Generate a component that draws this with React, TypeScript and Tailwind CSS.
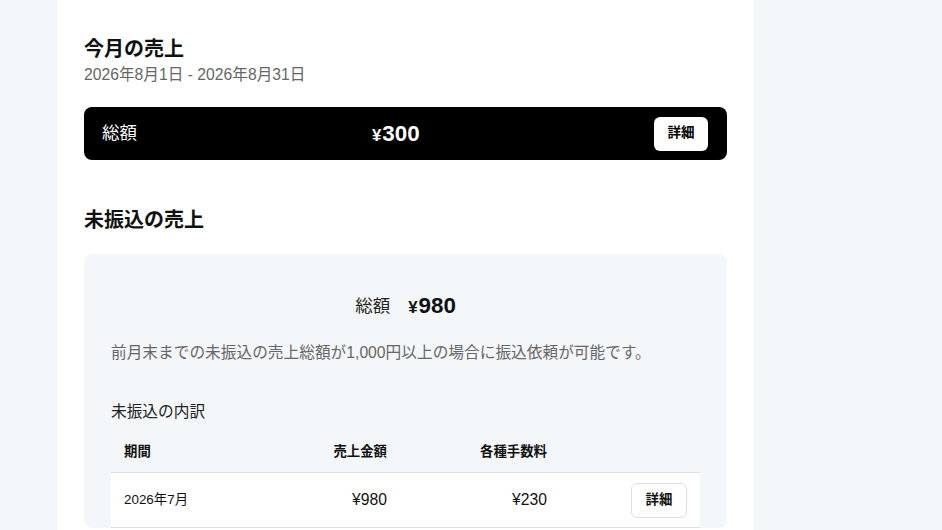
import { ReactNode } from 'react'

const FONT = "font-['Liberation_Sans','Noto_Sans_CJK_JP',sans-serif]"

function Yen({ value, className }: { value: string; className?: string }) {
  return (
    <span className={className}>
      <span className="text-[0.75em] mr-px">¥</span>
      {value}
    </span>
  )
}

function Cell({ children, className }: { children?: ReactNode; className?: string }) {
  return <div className={`px-[13px] flex items-center ${className ?? ''}`}>{children}</div>
}

const rows = [{ period: '2026年7月', sales: '¥980', fee: '¥230' }]

export default function App() {
  return (
    <div className={`${FONT} min-h-[530px] bg-[#f4f7fa] text-[#111]`}>
      <div className="ml-[57px] w-[696px] min-h-[530px] bg-white pl-[27px] pr-[26px] pt-[35px]">
        <section>
          <h2 className="text-[20px] font-bold leading-7">今月の売上</h2>
          <p className="text-[15.7px] text-[#666] leading-5 mt-[2px]">2026年8月1日 - 2026年8月31日</p>

          <div className="mt-[22px] h-[53px] rounded-lg bg-black flex items-center pl-[18px] pr-[19px] text-white">
            <div className="w-[240px] text-[17.5px]">総額</div>
            <div className="flex-1 text-[22.4px] font-bold">
              <Yen value="300" className="ml-[30px]" />
            </div>
            <button className="h-[34px] w-[54px] rounded-md bg-white text-black text-[13.5px] font-bold">詳細</button>
          </div>
        </section>

        <section className="mt-[46px]">
          <h2 className="text-[20px] font-bold leading-7">未振込の売上</h2>

          <div className="mt-[20px] rounded-lg bg-[#f4f7fa] px-[27px] pt-[38px]">
            <div className="flex items-center justify-center gap-[18px] h-[28px]">
              <span className="text-[17.5px] text-[#222]">総額</span>
              <Yen value="980" className="text-[22.4px] font-bold" />
            </div>

            <p className="mt-[21px] text-[15.7px] text-[#666] leading-6">
              前月末までの未振込の売上総額が1,000円以上の場合に振込依頼が可能です。
            </p>

            <p className="mt-[35px] text-[15.7px] text-[#222] leading-6">未振込の内訳</p>

            <div className="mt-[8px]">
              <div className="flex h-[41px] border-b border-[#dcdfe3] text-[13.4px] font-bold">
                <Cell className="w-[150px]">期間</Cell>
                <Cell className="w-[139px] justify-end">売上金額</Cell>
                <Cell className="w-[160px] justify-end">各種手数料</Cell>
                <Cell className="flex-1" />
              </div>
              {rows.map(r => (
                <div key={r.period} className="flex h-[55px] bg-white border-b border-[#dcdfe3]">
                  <Cell className="w-[150px] text-[13.4px]">{r.period}</Cell>
                  <Cell className="w-[139px] justify-end text-[15.7px]">{r.sales}</Cell>
                  <Cell className="w-[160px] justify-end text-[15.7px]">{r.fee}</Cell>
                  <Cell className="flex-1 justify-end">
                    <button className="h-[35px] w-[56px] rounded-md border border-[#dcdfe3] bg-white text-[13.4px] font-bold">
                      詳細
                    </button>
                  </Cell>
                </div>
              ))}
            </div>
          </div>
        </section>
      </div>
    </div>
  )
}
